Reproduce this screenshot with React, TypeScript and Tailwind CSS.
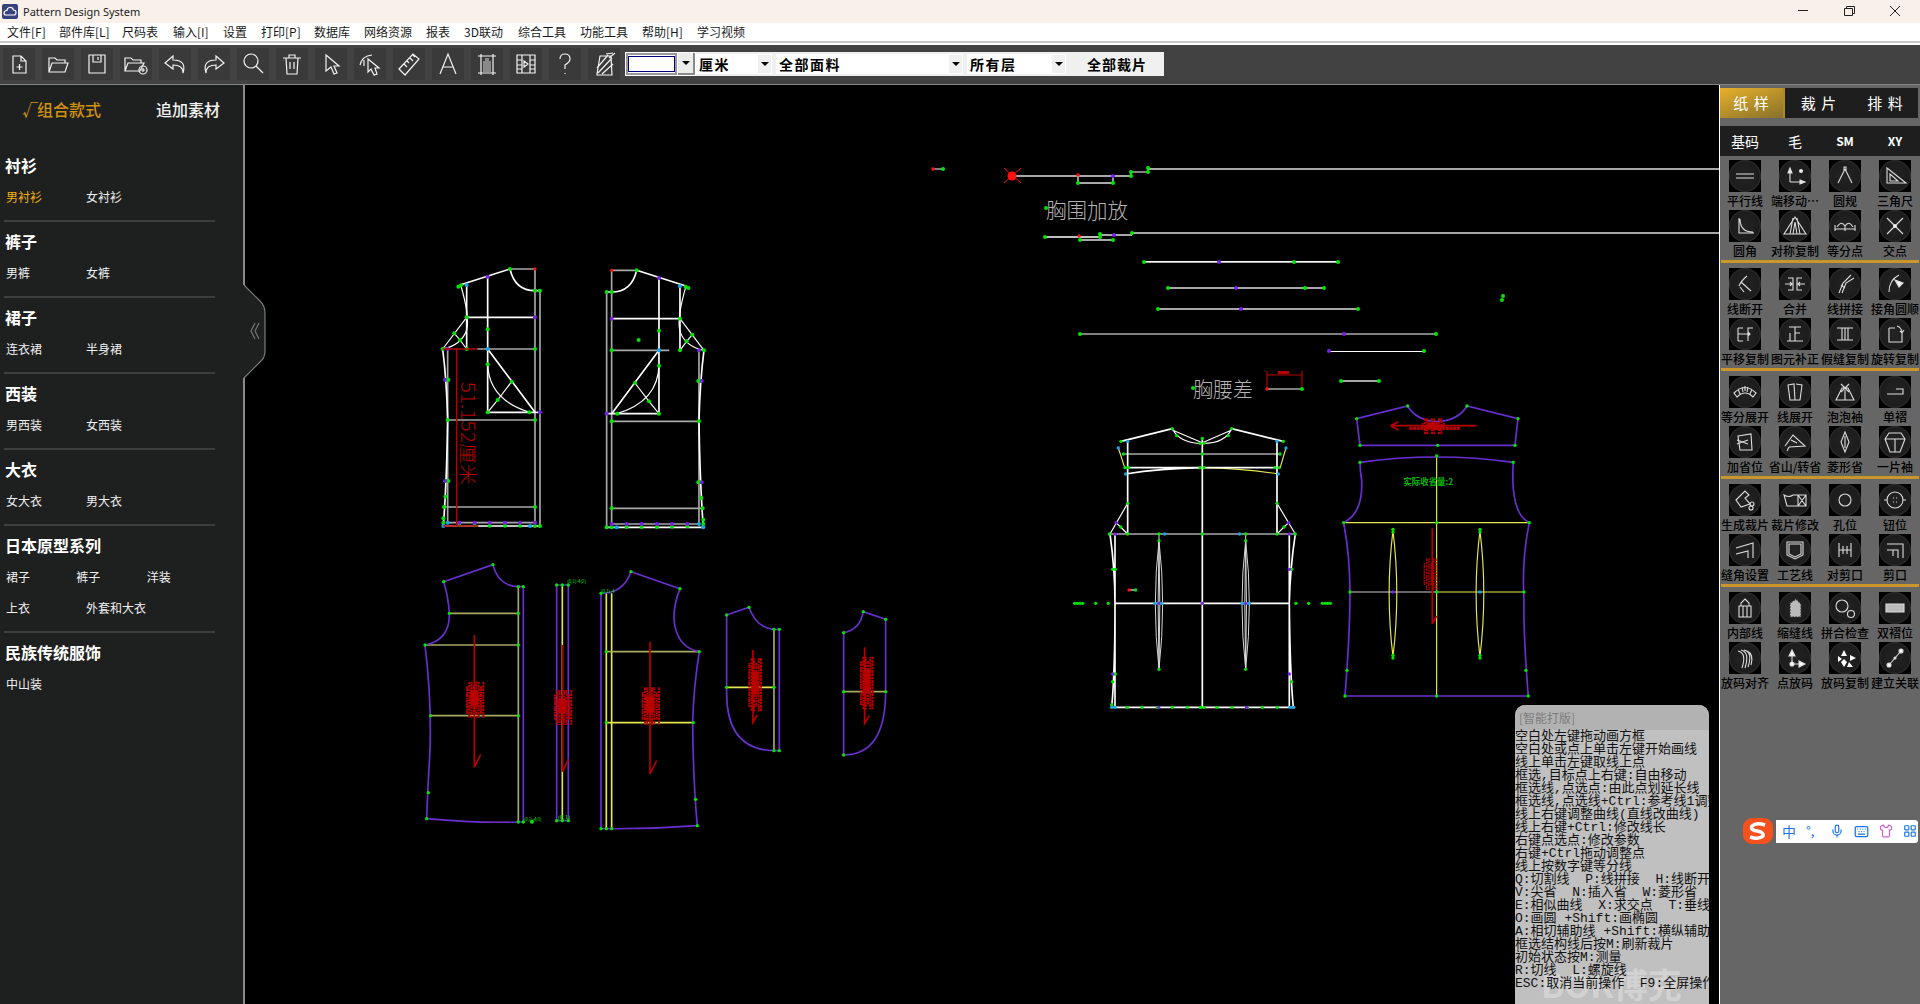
import React from 'react';
import { Keyboard, LayoutGrid, Mic, Shirt } from 'lucide-react';

const W = '#ffffff';
const GR = '#a8a8a8';
const GN = '#00e600';
const PU = '#7a1fe8';
const BL = '#12a8ee';
const RD = '#ff1010';
const DR = '#b80000';
const VI = '#6a2fd0';
const YE = '#e6e650';
const OL = '#a8a860';

const menus = [
    { label: '文件[F]', cls: 'w-[52px]' },
    { label: '部件库[L]', cls: 'w-[63px]' },
    { label: '尺码表', cls: 'w-[51px]' },
    { label: '输入[I]', cls: 'w-[50px]' },
    { label: '设置', cls: 'w-[38px]' },
    { label: '打印[P]', cls: 'w-[53px]' },
    { label: '数据库', cls: 'w-[50px]' },
    { label: '网络资源', cls: 'w-[62px]' },
    { label: '报表', cls: 'w-[38px]' },
    { label: '3D联动', cls: 'w-[54px]' },
    { label: '综合工具', cls: 'w-[62px]' },
    { label: '功能工具', cls: 'w-[62px]' },
    { label: '帮助[H]', cls: 'w-[55px]' },
    { label: '学习视频', cls: 'w-[62px]' },
];

const sections = [
    { title: '衬衫', rows: [['男衬衫', '女衬衫']] },
    { title: '裤子', rows: [['男裤', '女裤']] },
    { title: '裙子', rows: [['连衣裙', '半身裙']] },
    { title: '西装', rows: [['男西装', '女西装']] },
    { title: '大衣', rows: [['女大衣', '男大衣']] },
    { title: '日本原型系列', rows: [['裙子', '裤子', '洋装'], ['上衣', '外套和大衣']] },
    { title: '民族传统服饰', rows: [['中山装']] },
];

// toolbar icons, 32x32 box
const toolIcons: React.ReactNode[] = [
    <path d="M10 8H18L23 13V25H10ZM18 8V13H23M16.500 16V22M13.500 19H19.500" />,
    <path d="M7 24V10H13L15 12H23V15M7 24L10 15H26L23 24Z" />,
    <path d="M8 7H24V25H8ZM12 7V14H20V7M17 9V12" />,
    <>
        <path d="M5 23V10H11L13 12H21V15M5 23L8 15H24L20 23Z" />
        <circle cx="23" cy="22" r="4" />
        <path d="M23 20V24M21 22H25" />
    </>,
    <path d="M14 8L6 15L14 21V17Q24 17 24 25Q28 12 14 12Z" />,
    <path d="M18 8L26 15L18 21V17Q8 17 8 25Q4 12 18 12Z" />,
    <>
        <circle cx="14" cy="13" r="7" />
        <path d="M19 18L26 25" />
    </>,
    <path d="M7 10H25M10 10L11 26H21L22 10M13 10V7H19V10M14 14V21M18 14V21" />,
    <path d="M11 7L24 18H19L22 25L19 26L16 19L11 23Z" />,
    <path d="M6 17Q8 8 18 7M10 12V18M14 11L25 20H21L23 26L20 27L17 21L14 24Z" />,
    <path d="M6 21L20 6L26 11L12 27ZM11 16L14 19M14 13L16 15M17 10L20 13M20 7L22 9" />,
    <path d="M8 26L16 6L24 26M11 19H21" />,
    <>
        <path d="M10 6V27M22 6V27M7 8H25M7 25H25" />
        <path d="M12 24V13H14V10H18V13H20V24Z" fill="#8a8a8a" stroke="none" />
    </>,
    <path d="M7 7H25V25H7ZM12 7V25M20 7V25M7 12H12M7 17H12M7 21H12M20 12H25M20 17H25M20 21H25M14 13L18 16L14 19Z" />,
    <path d="M11 11Q11 6 16 6Q21 6 21 11Q21 14 16 17V21M16 25V26" />,
    <path d="M9 26L12 8H23L24 27H9ZM9 20L20 7M10 25L24 10M14 26L25 16M18 6L25 5M21 10L27 5" />,
];

// tool palette, grouped in 5 blocks of 8
const paletteIcons: { label: string; icon: React.ReactNode }[][] = [
    [
        { label: '平行线', icon: <path d="M7 14H25M7 18H25" /> },
        {
            label: '端移动…',
            icon: (
                <>
                    <path d="M11 22V11M11 22H23" />
                    <path d="M9 13L11 8L13 13ZM21 20L26 22L21 24Z" fill="#eee" />
                    <circle cx="22" cy="11" r="1.500" fill="#eee" />
                </>
            ),
        },
        { label: '圆规', icon: <path d="M16 9L9 23M16 9L23 23M15 7H17V10H15Z" /> },
        { label: '三角尺', icon: <path d="M8 8L27 23H8ZM11 14L19 21H11Z" /> },
        { label: '圆角', icon: <path d="M10 8V23H25M11 9Q11 22 24 22" /> },
        { label: '对称复制', icon: <path d="M16 7L27 24H5ZM14 8L11 24M18 8L21 24M14 24L16 12L18 24" /> },
        { label: '等分点', icon: <path d="M6 19H26M6 15V21M26 15V21M16 16V21M8 17Q12 10 16 16Q20 10 24 17" /> },
        {
            label: '交点',
            icon: (
                <>
                    <path d="M8 8L24 24M24 8L8 24" />
                    <circle cx="16" cy="16" r="1.500" fill="#fff" />
                </>
            ),
        },
    ],
    [
        { label: '线断开', icon: <path d="M18 8Q12 13 10 18M12 14L22 23M11 19L15 24" /> },
        { label: '合并', icon: <path d="M9 10H14V22H9M23 10H18V22H23M6 16H13M26 16H19M11 14L13 16L11 18M21 14L19 16L21 18" /> },
        { label: '线拼接', icon: <path d="M10 25L14 15L22 7M13 25L17 15L25 10M12 17L16 20" /> },
        {
            label: '接角圆顺',
            icon: (
                <>
                    <path d="M10 24Q10 12 20 7" />
                    <path d="M16 12L24 15L20 19Z" fill="#fff" />
                </>
            ),
        },
        { label: '平移复制', icon: <path d="M9 10V23M9 10H14M9 16H14M9 23H14M24 10H19V23M14 16H21M19 14L21 16L19 18" /> },
        { label: '图元补正', icon: <path d="M10 9H22M16 9V23M16 15H21M11 15V23M8 23H24" /> },
        { label: '假缝复制', icon: <path d="M8 10H24M16 10V22M8 22H24M13 10V22M19 10V22" /> },
        { label: '旋转复制', icon: <path d="M10 10V24H23V15M10 10H16M18 8Q22 9 23 14M21 13L23 15L25 12" /> },
    ],
    [
        { label: '等分展开', icon: <path d="M5 17Q16 6 27 17L24 21Q16 13 8 21ZM9 13L11 18M13 11L14 16M16 10V15M19 11L18 16M23 13L21 18" /> },
        { label: '线展开', icon: <path d="M9 9L15 8L16 24L11 24ZM17 8L23 9L21 24L16 24" /> },
        { label: '泡泡袖', icon: <path d="M7 24L13 12H19L25 24ZM12 8L20 16M20 8L12 16M16 14V24" /> },
        { label: '单褶', icon: <path d="M8 18H24V13H17" /> },
        { label: '加省位', icon: <path d="M9 10L22 8L23 24L11 24ZM8 14L19 18M8 18L19 14" /> },
        { label: '省山/转省', icon: <path d="M6 20L14 9L26 20L10 21M10 21L8 25M12 14L18 17" /> },
        { label: '菱形省', icon: <path d="M16 6L20 16L16 26L12 16ZM16 10V22" /> },
        { label: '一片袖', icon: <path d="M10 7H22L26 13L21 26H11L6 13ZM6 13H26M16 13V26" /> },
    ],
    [
        {
            label: '生成裁片',
            icon: (
                <>
                    <path d="M7 16L16 7L20 11L16 14L21 20L12 23Z" />
                    <circle cx="23" cy="20" r="2" />
                    <circle cx="22" cy="24" r="2" />
                </>
            ),
        },
        { label: '裁片修改', icon: <path d="M5 11Q10 14 14 11H19V22H8ZM19 11H27V22H19ZM19 11L27 22M27 11L19 22" /> },
        { label: '孔位', icon: <circle cx="16" cy="16" r="6" /> },
        {
            label: '钮位',
            icon: (
                <>
                    <circle cx="16" cy="16" r="8" />
                    <path d="M5 16H8M24 16H27M14 14H15M17 14H18M14 18H15M17 18H18" />
                </>
            ),
        },
        { label: '缝角设置', icon: <path d="M7 14L24 9V24M7 20L19 17V24" /> },
        { label: '工艺线', icon: <path d="M8 8H24V21L16 25L8 21ZM10 10H22V20L16 23L10 20Z" /> },
        { label: '对剪口', icon: <path d="M10 9V23M22 9V23M10 16H22M14 12V20M18 12V20" /> },
        { label: '剪口', icon: <path d="M8 10H24V24M8 16H19V24M14 16V22" /> },
    ],
    [
        { label: '内部线', icon: <path d="M16 7L20 11V14H22V25H10V14H12V11ZM14 14V25M18 14V25M12 14H20" /> },
        {
            label: '缩缝线',
            icon: <path d="M11 25V11L17 7L22 12V25Z" fill="#bbb" stroke="#333" strokeDasharray="2 1" />,
        },
        {
            label: '拼合检查',
            icon: (
                <>
                    <circle cx="13" cy="14" r="6" />
                    <circle cx="22" cy="22" r="3.500" />
                </>
            ),
        },
        { label: '双褶位', icon: <path d="M7 12H25V20H7Z" fill="#bbb" stroke="#ddd" /> },
        { label: '放码对齐', icon: <path d="M9 9Q18 11 13 26M12 8Q21 10 16 26M15 8Q24 10 19 25M18 9Q25 12 22 23" /> },
        {
            label: '点放码',
            icon: (
                <>
                    <path d="M13 22V12M13 22H22" />
                    <path d="M10 14L13 8L16 14ZM20 19L26 22L20 25Z" fill="#fff" />
                    <circle cx="13" cy="22" r="2" fill="#fff" />
                </>
            ),
        },
        {
            label: '放码复制',
            icon: (
                <path
                    d="M15 8L18 14H12ZM21 13L27 16L21 19ZM9 14L13 17L9 20ZM15 17L18 20L15 25L12 20ZM20 20L24 25L18 25Z"
                    fill="#fff"
                    stroke="none"
                />
            ),
        },
        {
            label: '建立关联',
            icon: (
                <>
                    <path d="M10 23L22 9" />
                    <circle cx="10" cy="23" r="2" fill="#fff" />
                    <circle cx="22" cy="9" r="2" fill="#fff" />
                    <circle cx="16" cy="16" r="1" fill="#fff" />
                </>
            ),
        },
    ],
];

const helpLines = [
    '空白处左键拖动画方框',
    '空白处或点上单击左键开始画线',
    '线上单击左键取线上点',
    '框选,目标点上右键:自由移动',
    '框选线,点选点:由此点划延长线',
    '框选线,点选线+Ctrl:参考线1调整曲线',
    '线上右键调整曲线(直线改曲线)',
    '线上右键+Ctrl:修改线长',
    '右键点选点:修改参数',
    '右键+Ctrl拖动调整点',
    '线上按数字键等分线',
    'Q:切割线  P:线拼接  H:线断开',
    'V:尖省  N:插入省  W:菱形省',
    'E:相似曲线  X:求交点  T:垂线',
    'O:画圆 +Shift:画椭圆',
    'A:相切辅助线 +Shift:横纵辅助线',
    '框选结构线后按M:刷新裁片',
    '初始状态按M:测量',
    'R:切线  L:螺旋线',
    'ESC:取消当前操作  F9:全屏操作',
];

// --- drawing helpers (coordinates are read from 3x crops, hence the scale group) ---

const Crop = ({ x, y, children }: { x: number; y: number; children: React.ReactNode }) => (
    <g transform={`translate(${x} ${y}) scale(0.3333)`}>{children}</g>
);

const P = ({ d, c = W, w = 5 }: { d: string; c?: string; w?: number }) => (
    <path d={d} stroke={c} strokeWidth={w} fill="none" />
);

const Dots = ({ p, c = GN, r = 6 }: { p: string; c?: string; r?: number }) => (
    <>
        {p.split(' ').map((pair) => {
            const [x, y] = pair.split(',');
            return <circle key={pair} cx={x} cy={y} r={r} fill={c} />;
        })}
    </>
);

// unreadable stack of overlapping red labels
const Blob = ({ x, y, w, h, solid = true }: { x: number; y: number; w: number; h: number; solid?: boolean }) => {
    const cols = [];
    for (let i = 0; i * 7 < w; i++) {
        const inset = i % 3 === 0 ? 14 : 0;
        cols.push(
            <path
                key={i}
                d={`M${x + i * 7 + 3} ${y + inset}V${y + h - inset}`}
                stroke={DR}
                strokeWidth={solid ? 6 : 4}
                strokeDasharray={i % 2 ? '8 2' : '5 1 9 2'}
            />,
        );
    }
    return (
        <>
            {cols}
            {solid && <rect x={x + w * 0.25} y={y + h * 0.25} width={w * 0.5} height={h * 0.42} fill={DR} />}
        </>
    );
};

const GreenTag = ({ x, y, t, n = 54 }: { x: number; y: number; t: string; n?: number }) => (
    <text x={x} y={y} fill={GN} fontSize={13} textLength={n} lengthAdjust="spacingAndGlyphs" fontFamily="'Noto Sans CJK SC', sans-serif">
        {t}
    </text>
);

const DraftBlock = () => (
    <>
        <P c={GR} d="M270 57H345V820M360 122V828M83 297V820M83 510H345M72 771H345M83 818H345M172 297H345" />
        <P d="M120 105L270 57M270 57Q285 122 345 122H360M203 80V487M140 105V297M140 202H345" />
        <P w={3.5} d="M122 105Q150 200 140 240Q125 285 68 297M140 202L68 297M103 250L120 270L140 297" />
        <P d="M68 297Q80 390 83 510Q80 700 70 828M70 828H360M203 297L345 487M203 487H360" />
        <P w={3.5} d="M203 340Q205 450 330 487M275 395L233 450L203 487" />
        <Dots p="115,110 123,106 270,57 345,122 360,122 140,202 103,250 120,270 68,297 140,297 203,238 203,343 345,297 275,395 233,450 203,487 328,487 80,389 85,389 83,510 345,510 80,693 85,693 76,740 72,771 345,771 70,805 70,818 118,825 164,826 209,827 255,827 300,827 345,828 360,828" />
        <Dots c={PU} p="203,80 345,202 83,297 360,487 75,389 75,693 118,818 164,818 209,818 255,818 300,818 345,818" />
        <Dots c={BL} p="140,105 203,297 83,818 70,828 330,828" />
        <Dots c={RD} r={5} p="345,57" />
    </>
);

const Canvas = () => (
    <svg viewBox="245 85 1474 919" width="1474" height="919" className="block">
        {/* front and back block */}
        <Crop x={420} y={250}>
            <DraftBlock />
            <P c={DR} w={4} d="M110 297V828M68 297H172M70 828H175" />
            <text
                transform="translate(122 395) rotate(90)"
                fill={DR}
                fontSize={56}
                fontWeight={300}
                textLength={310}
                lengthAdjust="spacingAndGlyphs"
                fontFamily="'Noto Sans CJK SC', sans-serif"
            >
                51.152厘米
            </text>
            <g transform="translate(920 4) scale(-1 1)">
                <DraftBlock />
            </g>
            <Dots p="656,270" />
        </Crop>

        {/* cut pieces */}
        <Crop x={410} y={550}>
            <P c={OL} d="M325 110V816M62 497H325" />
            <P c={OL} d="M118 190H325M45 285H325" />
            <P c={VI} d="M101 95L249 44Q265 108 325 110H340V816H325Q200 820 50 806Q52 740 60 600Q65 450 45 285Q120 270 118 190Q115 140 101 95Z" />
            <P c={DR} d="M193 255V652L212 613" />
            <Blob x={168} y={395} w={50} h={110} />
            <Dots r={5} p="101,95 249,44 325,110 340,110 118,190 325,190 45,285 325,285 62,497 325,497 55,728 50,806 325,816 340,816" />
            <GreenTag x={342} y={813} t="(0,1)-4(3)" n={52} />
            <Dots r={6} p="366,815" />

            <P c={YE} d="M457 105V812" />
            <P c={VI} d="M440 105H475V812H440Z" />
            <P c={DR} d="M457 285V665L476 628" />
            <Blob x={432} y={420} w={50} h={105} />
            <Dots r={5} p="440,105 457,105 475,105 440,812 457,812 475,812" />
            <GreenTag x={472} y={100} t="(0,1)-4(2)" n={56} />
            <GreenTag x={443} y={808} t="(0,1)" n={38} />

            <P c={YE} d="M589 130V836M605 130V836M589 518H850" />
            <P c={OL} d="M589 305H868" />
            <P c={VI} d="M663 65L810 116Q785 180 795 230Q810 295 868 305Q850 420 848 520Q850 700 862 827Q720 838 573 836V130Q640 130 663 65Z" />
            <P c={DR} d="M720 275V672L740 632" />
            <Blob x={695} y={412} w={50} h={112} />
            <Dots r={5} p="663,65 810,116 868,305 589,305 589,518 850,518 857,748 862,827 573,836 589,836 605,836 573,130" />
            <GreenTag x={572} y={128} t="(0,1)-4" n={42} />

            <P c={OL} d="M1092 238V602" />
            <P c={YE} d="M950 412H1092" />
            <P c={VI} d="M950 195L1017 172Q1040 235 1092 238H1108V602H1092Q950 600 950 430Z" />
            <P c={DR} d="M1029 300V517L1042 495" />
            <Blob x={1015} y={325} w={40} h={160} />
            <Dots r={5} p="950,195 1017,172 1092,238 1108,238 950,412 1092,412 1092,602 1108,602" />

            <P c={OL} d="M1301 425H1427" />
            <P c={VI} d="M1427 208L1360 185Q1350 240 1301 248V615Q1425 615 1427 430Z" />
            <P c={DR} d="M1364 292V520L1378 497" />
            <Blob x={1350} y={320} w={40} h={160} />
            <Dots r={5} p="1427,208 1360,185 1301,248 1301,425 1427,425 1301,615" />
        </Crop>

        {/* top draft lines */}
        <g fill="none">
            <path d="M933 169H943" stroke={GR} strokeWidth="1.500" />
            <path d="M1012 176H1131M1078 183H1113M1148 169H1719" stroke={GR} strokeWidth="2" />
            <path d="M1078 176V183M1113 176V183M1131 176V172H1148V169" stroke={W} strokeWidth="1.200" />
            <path d="M1004 168L1021 183M1021 168L1004 183" stroke={RD} strokeWidth="1" />
            <path d="M1132 233H1719M1100 235H1132M1080 240H1113" stroke={GR} strokeWidth="2" />
            <path d="M1045 237H1100M1132 233V235M1100 235V237" stroke={W} strokeWidth="1.300" />
            <path d="M1144 262H1338M1168 288H1324M1158 309H1358M1341 381H1379" stroke={GR} strokeWidth="2" />
            <path d="M1144 261.500H1338M1080 334H1436M1329 351.500H1424" stroke={W} strokeWidth="1" />
            <path d="M1267 371V389M1302 371V389M1267 375H1302" stroke={DR} strokeWidth="1.200" />
            <path d="M1267 389H1302" stroke={GR} strokeWidth="1.500" />
            <path d="M1278 372.500H1289" stroke={DR} strokeWidth="3" />
        </g>
        <circle cx="1012" cy="176" r="4.500" fill={RD} />
        <g fill={GN}>
            {[
                [943, 169], [1131, 176], [1131, 172], [1148, 168], [1148, 172], [1078, 183], [1113, 183], [1046, 208],
                [1045, 237], [1100, 237], [1100, 234], [1132, 233], [1080, 240], [1113, 240],
                [1144, 262], [1294, 262], [1338, 262], [1168, 288], [1305, 288], [1324, 288], [1158, 309], [1358, 309],
                [1080, 334], [1436, 334], [1424, 351], [1341, 381], [1379, 381], [1503, 296], [1502, 300], [1193, 388], [1302, 389],
            ].map(([x, y]) => (
                <circle key={`${x}-${y}`} cx={x} cy={y} r="2" />
            ))}
        </g>
        <g fill={PU}>
            {[[1219, 262], [1236, 288], [1241, 309], [1344, 334], [1329, 351], [1113, 176], [1114, 235]].map(([x, y]) => (
                <circle key={`${x}-${y}`} cx={x} cy={y} r="2" />
            ))}
        </g>
        <g fill={RD}>
            {[[933, 169], [1078, 175], [1079, 236], [1267, 389]].map(([x, y]) => (
                <circle key={`${x}-${y}`} cx={x} cy={y} r="1.800" />
            ))}
        </g>
        <text x="1046" y="218" fill="#b4b4b4" fontSize="21" fontWeight={300} textLength={82} lengthAdjust="spacingAndGlyphs" fontFamily="'Noto Sans CJK SC', sans-serif">
            胸围加放
        </text>
        <text x="1193" y="397" fill="#b4b4b4" fontSize="21" fontWeight={300} textLength={60} lengthAdjust="spacingAndGlyphs" fontFamily="'Noto Sans CJK SC', sans-serif">
            胸腰差
        </text>

        {/* bodice draft and finished pieces */}
        <Crop x={1060} y={400}>
            <P c={GR} d="M190 162H660M148 402H706" />
            <P c={YE} w={3.500} d="M427 203Q550 205 655 222M175 144L195 205M678 144L660 205" />
            <P d="M427 115V922M200 203H650M197 222Q300 205 427 203M203 124V402M651 124V402M183 124L337 86M515 86L670 124" />
            <P w={3.500} d="M337 86Q360 130 425 130M337 90L427 128M515 86Q495 130 430 130M515 90L427 128" />
            <P w={3.500} d="M203 310L150 402M651 310L706 402M168 368L182 381L203 402M686 368L672 381L651 402" />
            <P d="M150 402Q165 510 165 610Q165 820 155 922M165 402V922M706 402Q690 510 688 610Q690 820 700 922M688 402V922M155 922H706M165 610H688" />
            <P c="#d8d8d8" w={3} d="M297 402V422Q275 610 297 808Q319 610 297 422M297 422Q292 610 297 808Q302 610 297 422M557 402V422Q535 610 557 808Q579 610 557 422M557 422Q552 610 557 808Q562 610 557 422" />
            <P c={GR} d="M207 570H227" />
            <Dots r={5} p="183,124 337,86 515,86 670,124 350,107 505,107 427,115 420,130 432,130 427,162 190,162 660,162 195,203 205,203 420,203 432,203 645,203 657,203 203,310 651,310 182,381 672,381 148,402 203,402 297,402 427,402 557,402 651,402 706,402 297,422 557,422 158,508 166,508 695,508 160,822 166,822 158,845 695,845 297,808 557,808 155,914 201,922 246,922 292,922 337,922 382,922 422,922 432,922 471,922 516,922 562,922 607,922 652,922" />
            <Dots r={5} p="44,610 52,610 60,610 68,610 107,610 145,610 708,610 746,610 787,610 795,610 803,610 811,610" />
            <Dots c={PU} r={5} p="168,368 686,368 166,402 688,402 297,610 427,610 557,610 688,508 688,822 158,822 296,922 560,922" />
            <Dots c={BL} r={5} p="175,144 678,144 203,124 651,124 197,222 655,222 314,402 539,402 285,610 305,610 547,610 567,610 155,922 165,922 690,922 700,922" />
            <Dots c={RD} r={5} p="207,570" />
            <Dots r={5} p="227,570" />

            <P c={YE} w={3.500} d="M1130 168V888M851 368H1408M1130 576H1392M999 392Q976 580 999 770Q1022 580 999 392M1260 392Q1237 580 1260 770Q1283 580 1260 392" />
            <P c="#cfcfcf" w={3.500} d="M870 576H1130" />
            <P c={VI} d="M890 56L1043 18Q1070 62 1130 65Q1195 62 1221 18L1374 56L1365 136H900ZM900 187Q1130 155 1360 187Q1350 340 1408 368Q1385 480 1392 600Q1390 700 1405 888H855Q870 700 870 576Q870 470 851 368Q910 340 905 240Q900 210 900 187Z" />
            <P c={DR} d="M1250 77H992L1015 65M992 77L1015 90M1117 385V672L1130 648" />
            <Blob x={1085} y={55} w={70} h={48} />
            <path d="M1048 85H1200" stroke={DR} strokeWidth="10" strokeDasharray="9 2" />
            <Blob x={1090} y={475} w={40} h={95} solid={false} />
            <text x="1030" y="256" fill="#00b400" fontSize="26" fontWeight={700} textLength={150} lengthAdjust="spacingAndGlyphs" fontFamily="'Noto Sans CJK SC', sans-serif">
                实际收省量:2
            </text>
            <Dots r={5} p="890,56 1043,18 1221,18 1374,56 900,136 1133,136 1365,136 900,187 1360,187 1130,168 851,368 1130,368 1408,368 870,576 1130,576 1392,576 861,811 1398,811 855,888 1130,888 1405,888 999,388 999,396 1260,388 1260,396 999,766 999,774 1260,766 1260,774" />
            <Dots c={PU} r={5} p="999,576" />
            <Dots c={BL} r={5} p="1260,576" />
        </Crop>
    </svg>
);

const ToolButton = ({ children }: { children: React.ReactNode }) => (
    <div className="flex h-8 w-8 items-center justify-center bg-[#3a3a3a]">
        <svg viewBox="0 0 32 32" className="h-8 w-8" fill="none" stroke="#f2f2f2" strokeWidth="1.200">
            {children}
        </svg>
    </div>
);

const DropArrow = ({ cls }: { cls: string }) => (
    <div className={`flex items-center justify-center bg-[#f0f0f0] ${cls}`}>
        <div className="h-0 w-0 border-x-[4px] border-t-[4px] border-x-transparent border-t-black" />
    </div>
);

const Combo = ({ label, cls, arrow }: { label: string; cls: string; arrow: string }) => (
    <div className={`flex h-5 items-center justify-between bg-white pl-[3px] pr-px ${cls}`}>
        <span className="text-[14px] font-bold leading-5 tracking-[1.500px] text-black">{label}</span>
        <DropArrow cls={arrow} />
    </div>
);

const PaletteItem = ({ label, icon }: { label: string; icon: React.ReactNode }) => (
    <div className="flex h-[50px] w-[50px] flex-col items-center">
        <div className="flex h-8 w-8 items-center justify-center bg-black">
            <div className="h-8 w-8 rounded-full bg-[radial-gradient(circle,#242424_0%,#1c1c1c_62%,#5c5c5c_90%,#8c8c8c_100%)]">
                <svg viewBox="0 0 32 32" className="h-8 w-8" fill="none" stroke="#dcdcdc" strokeWidth="1.100">
                    {icon}
                </svg>
            </div>
        </div>
        <span className="whitespace-nowrap text-[12px] font-medium leading-[18px] text-black">{label}</span>
    </div>
);

const App = () => {
    return (
        <div className="relative flex h-[1004px] w-[1920px] flex-col overflow-hidden bg-black [font-family:'Noto_Sans_CJK_SC','Noto_Sans',sans-serif]">
            {/* Title bar */}
            <div className="flex h-[23px] items-center justify-between bg-[#f8f0e9] pl-[2px]">
                <div className="flex items-center">
                    <div className="flex h-[15px] w-[16px] items-center justify-center rounded-[2px] bg-[#36437f]">
                        <svg viewBox="0 0 16 15" className="h-[15px] w-[16px]" fill="none" stroke="#fff" strokeWidth="1.200">
                            <path d="M4 11H12Q14 11 14 8.500Q14 6 11.500 6Q10.500 3 7.500 3.500Q5 4 5 6.500Q2 6.500 2 9Q2 11 4 11Z" />
                        </svg>
                    </div>
                    <span className="ml-[5px] text-[11px] leading-[23px] text-[#222] [font-family:'Noto_Sans',sans-serif]">Pattern Design System</span>
                </div>
                <svg viewBox="0 0 122 23" className="h-[23px] w-[122px]" fill="none" stroke="#222" strokeWidth="1">
                    <path d="M0 10.500H10M46.500 8.500H54.500V15.500H46.500ZM48.500 8.500V6.500H56.500V13.500H54.500M92 6L102 16M102 6L92 16" />
                </svg>
            </div>

            {/* Menu */}
            <div className="flex h-[18px] items-center bg-white pl-[7px]">
                {menus.map((m) => (
                    <span key={m.label} className={`whitespace-nowrap text-[12px] leading-[18px] text-[#1a1a1a] ${m.cls}`}>
                        {m.label}
                    </span>
                ))}
            </div>
            <div className="h-[4px] border-t-2 border-[#c8c8c8] bg-white" />

            {/* Toolbar */}
            <div className="flex h-[40px] items-center gap-[7px] border-b border-[#858585] bg-[#424242] pl-[3px] pb-px">
                {toolIcons.map((icon, i) => (
                    <ToolButton key={i}>{icon}</ToolButton>
                ))}
                <div className="-ml-[2px] flex h-6 w-[539px] items-center bg-[#f0f0f0]">
                    <div className="flex h-6 w-[71px] items-center bg-white pl-[1px]">
                        <div className="flex h-[22px] w-[51px] items-center justify-center border-2 border-[#9a9a9a]">
                            <div className="h-4 w-[47px] border border-[#000080]" />
                        </div>
                        <div className="ml-[1px] flex h-[22px] w-[17px] items-center justify-center border-b-2 border-r-2 border-[#8a8a8a] bg-[#ececec]">
                            <div className="h-0 w-0 border-x-[4px] border-t-[4px] border-x-transparent border-t-black" />
                        </div>
                    </div>
                    <Combo label="厘米" cls="w-[76px]" arrow="h-[18px] w-[13px]" />
                    <div className="w-[4px]" />
                    <Combo label="全部面料" cls="w-[187px]" arrow="h-[18px] w-[13px]" />
                    <div className="w-[4px]" />
                    <Combo label="所有层" cls="w-[99px]" arrow="h-[18px] w-[13px]" />
                    <span className="ml-[21px] text-[14px] font-bold leading-5 tracking-[1px] text-black">全部裁片</span>
                </div>
            </div>

            {/* Body */}
            <div className="flex min-h-0 flex-1">
                {/* Style library */}
                <div className="w-[243px] shrink-0 bg-[#1e2020]">
                    <div className="flex h-[61px] pt-3 text-[16px] leading-6">
                        <span className="ml-[22px] w-[15px] font-medium text-[#d0920e]">√</span>
                        <span className="font-medium text-[#d0920e]">组合款式</span>
                        <span className="ml-[55px] font-medium text-[#f2f2f2]">追加素材</span>
                    </div>
                    {sections.map((s, i) => (
                        <div key={s.title} className={`ml-1 w-[211px] border-[#3c3e3e] pt-[7px] pb-[11px] ${i < sections.length - 1 ? 'border-b-2' : ''}`}>
                            <div className="pl-px text-[16px] font-bold leading-6 text-white">{s.title}</div>
                            {s.rows.map((row, r) => (
                                <div key={r} className={`flex ${r === 0 ? 'mt-2' : 'mt-[7px]'}`}>
                                    {row.map((item) => (
                                        <span key={item} className={`w-[80px] pl-[2px] text-[12px] leading-6 ${item === '男衬衫' ? 'text-[#f0b010]' : 'text-[#f0f0f0]'}`}>
                                            {item}
                                        </span>
                                    ))}
                                </div>
                            ))}
                        </div>
                    ))}
                </div>
                <div className="w-[2px] shrink-0 bg-[#8a8a8a]" />

                {/* Drawing area */}
                <div className="relative min-w-0 flex-1 overflow-hidden bg-black">
                    <Canvas />
                    {/* Help overlay */}
                    <div className="absolute bottom-0 right-[10px] h-[299px] w-[194px] overflow-hidden rounded-t-[10px] bg-[#c0c0c0]">
                        <div className="h-[25px] bg-[#b2b2b2] pl-[4px] text-[12px] leading-[25px] text-[#7c7c7c]">[智能打版]</div>
                        <div className="absolute bottom-[3px] left-[26px] whitespace-nowrap text-[34px] font-bold leading-[34px] text-[#d2d2d2]">BOK博克</div>
                        <div className="relative [font-family:'Liberation_Mono','Noto_Sans_CJK_SC',monospace]">
                            {helpLines.map((line) => (
                                <div key={line} className="h-[13px] whitespace-pre text-[13px] leading-[13px] text-[#111]">
                                    {line}
                                </div>
                            ))}
                        </div>
                    </div>
                </div>

                {/* Tool palette */}
                <div className="w-[201px] shrink-0 border-l border-white bg-[#666666]">
                    <div className="mt-[3px] flex h-[30px] w-[198px] bg-[#1e1e1e] text-[15px] leading-[30px] text-white">
                        <span className="w-[65px] border-r-2 border-[#b08820] bg-[linear-gradient(160deg,#e8b02a,#87702c)] text-center tracking-[1px]">纸 样</span>
                        <span className="w-[68px] text-center tracking-[1px]">裁 片</span>
                        <span className="w-[65px] text-center tracking-[1px]">排 料</span>
                    </div>
                    <div className="mt-2 flex h-[30px] items-center bg-[#1e1e1e] text-white">
                        <span className="w-[50px] text-center text-[14px]">基码</span>
                        <span className="w-[50px] text-center text-[14px]">毛</span>
                        <span className="w-[50px] text-center text-[12px] font-bold">SM</span>
                        <span className="w-[50px] text-center text-[12px] font-bold">XY</span>
                    </div>
                    <div className="mt-1 flex flex-col">
                        {paletteIcons.map((group, g) => (
                            <div key={g}>
                                <div className="grid grid-cols-[repeat(4,50px)]">
                                    {group.map((it) => (
                                        <PaletteItem key={it.label} label={it.label} icon={it.icon} />
                                    ))}
                                </div>
                                {g < 4 && <div className="mb-[5px] ml-px h-[3px] w-[198px] bg-[#c8962a]" />}
                            </div>
                        ))}
                    </div>
                </div>
            </div>

            {/* Collapse handle */}
            <svg viewBox="0 0 24 94" className="absolute left-[243px] top-[285px] h-[94px] w-[24px]">
                <path d="M0 0H1L17 16Q22 21 22 28V66Q22 73 17 77L1 93H0Z" fill="#1e2020" />
                <path d="M1 0L17 16Q22 21 22 28V66Q22 73 17 77L1 93" fill="none" stroke="#7a7a7a" strokeWidth="1.200" />
                <path d="M12 38L8 46L12 54M16 38L12 46L16 54" fill="none" stroke="#707070" strokeWidth="1.300" />
            </svg>

            {/* IME status bar */}
            <div className="absolute left-[1742px] top-[817px] flex items-center">
                <svg viewBox="0 0 32 28" className="h-[28px] w-[32px]">
                    <rect x="1" y="1" width="30" height="26" rx="9" fill="#f4511e" />
                    <path d="M23 8Q14 5 10 9Q8 13 15 14Q22 15 21 19Q17 23 8 20" fill="none" stroke="#fff" strokeWidth="3.500" />
                </svg>
                <div className="ml-[2px] flex h-[23px] w-[142px] items-center gap-[10px] rounded-r-[3px] bg-white pl-[6px] text-[#1b74e8]">
                    <span className="w-[14px] text-[14px] leading-[23px]">中</span>
                    <span className="w-[14px] text-[13px] leading-[20px]">°,</span>
                    <Mic size={14} />
                    <Keyboard size={15} />
                    <Shirt size={14} className="text-[#d060d0]" />
                    <LayoutGrid size={14} />
                </div>
            </div>
        </div>
    );
};

export default App;
